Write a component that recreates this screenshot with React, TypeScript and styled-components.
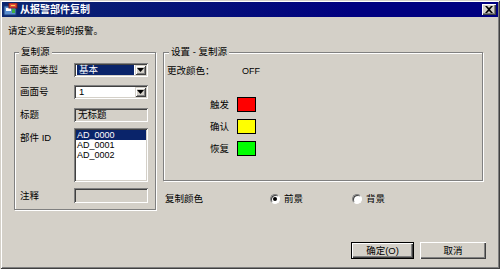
import React from "react";
import styled, { createGlobalStyle } from "styled-components";

const Global = createGlobalStyle`
  html, body { margin: 0; padding: 0; background: #d4d0c8; }
  * { box-sizing: border-box; }
`;

const FONT = `"Liberation Sans", "Noto Sans CJK SC", sans-serif`;

const Window = styled.div`
  width: 500px;
  height: 269px;
  background: #d4d0c8;
  padding: 2px;
  display: flex;
  flex-direction: column;
  font-family: ${FONT};
  font-size: 9.5px;
  color: #000;
  box-shadow: inset 1px 1px 0 #d4d0c8, inset -1px -1px 0 #404040,
    inset 2px 2px 0 #ffffff, inset -2px -2px 0 #808080;
`;

const TitleBar = styled.div`
  height: 15px;
  display: flex;
  align-items: center;
  padding: 0 2px 0 1px;
  background: linear-gradient(to right, #0b2670, #000080 70%);
  color: #fff;
  font-weight: bold;
  font-size: 10px;
  gap: 2px;
`;

const TitleText = styled.span`
  flex: 1;
  line-height: 15px;
  letter-spacing: 0;
`;

const CloseBtn = styled.div`
  width: 14px;
  height: 11px;
  background: #d4d0c8;
  display: flex;
  align-items: center;
  justify-content: center;
  box-shadow: inset 1px 1px 0 #ffffff, inset -1px -1px 0 #404040,
    inset -2px -2px 0 #808080;
`;

const Content = styled.div`
  flex: 1;
  display: flex;
  flex-direction: column;
`;

const Instruction = styled.div`
  margin: 8px 0 0 6px;
  line-height: 12px;
  height: 12px;
`;

const MainRow = styled.div`
  display: flex;
  gap: 7px;
  margin: 15px 0 0 12px;
`;

const Group = styled.div<{ $w: number; $h: number; $pt: number; $pl: number }>`
  position: relative;
  width: ${(p) => p.$w}px;
  height: ${(p) => p.$h}px;
  border: 1px solid #808080;
  box-shadow: 1px 1px 0 #ffffff, inset 1px 1px 0 #ffffff;
  padding: ${(p) => p.$pt}px 0 0 ${(p) => p.$pl}px;
  display: flex;
  flex-direction: column;
`;

const Legend = styled.span<{ $x: number }>`
  position: absolute;
  top: -7px;
  left: ${(p) => p.$x}px;
  padding: 0 2px;
  background: #d4d0c8;
  line-height: 12px;
`;

const FieldRow = styled.div<{ $mt: number; $align?: string }>`
  display: flex;
  align-items: ${(p) => p.$align || "center"};
  margin-top: ${(p) => p.$mt}px;
`;

const Label = styled.span<{ $w: number; $pt?: number }>`
  width: ${(p) => p.$w}px;
  line-height: 12px;
  padding-top: ${(p) => p.$pt || 0}px;
`;

const Sunken = styled.div<{ $h: number; $bg?: string }>`
  width: 74px;
  height: ${(p) => p.$h}px;
  background: ${(p) => p.$bg || "#ffffff"};
  box-shadow: inset 1px 1px 0 #808080, inset -1px -1px 0 #ffffff,
    inset 2px 2px 0 #404040, inset -2px -2px 0 #d4d0c8;
  padding: 2px;
  display: flex;
  position: relative;
`;

const ComboText = styled.div<{ $sel?: boolean }>`
  flex: 1;
  margin: 0 1px 0 1px;
  padding-left: 2px;
  line-height: 10px;
  font-size: 9.5px;
  background: ${(p) => (p.$sel ? "#0a246a" : "transparent")};
  color: ${(p) => (p.$sel ? "#fff" : "#000")};
`;

const DropBtn = styled.div`
  width: 11px;
  height: 10px;
  background: #d4d0c8;
  display: flex;
  align-items: center;
  justify-content: center;
  box-shadow: inset 1px 1px 0 #d4d0c8, inset -1px -1px 0 #404040,
    inset 2px 2px 0 #ffffff, inset -2px -2px 0 #808080;
`;

const StaticText = styled.div`
  padding-left: 2px;
  line-height: 10px;
`;

const List = styled.div`
  flex: 1;
  display: flex;
  flex-direction: column;
`;

const ListItem = styled.div<{ $sel?: boolean }>`
  height: 10px;
  line-height: 10px;
  font-size: 9px;
  padding-left: 1px;
  background: ${(p) => (p.$sel ? "#0a246a" : "transparent")};
  color: ${(p) => (p.$sel ? "#fff" : "#000")};
`;

const RightCol = styled.div`
  width: 320px;
  display: flex;
  flex-direction: column;
`;

const Value = styled.span`
  font-size: 9px;
  line-height: 12px;
`;

const ColorRow = styled.div<{ $mt: number }>`
  display: flex;
  align-items: center;
  margin-top: ${(p) => p.$mt}px;
  gap: 8px;
`;

const ColorLabel = styled.span`
  width: 62px;
  text-align: right;
  line-height: 12px;
`;

const Swatch = styled.div<{ $c: string }>`
  width: 19px;
  height: 15px;
  background: ${(p) => p.$c};
  border: 1px solid #000;
`;

const CopyRow = styled.div`
  display: flex;
  align-items: center;
  margin: 12px 0 0 2px;
  height: 12px;
`;

const RadioOpt = styled.label<{ $w?: number }>`
  display: flex;
  align-items: center;
  gap: 4px;
  width: ${(p) => (p.$w ? `${p.$w}px` : "auto")};
  line-height: 12px;
`;

const RadioCircle = styled.span<{ $on?: boolean }>`
  width: 10px;
  height: 10px;
  border-radius: 50%;
  background: #fff;
  border: 1px solid;
  border-color: #808080 #ffffff #ffffff #808080;
  box-shadow: inset 1px 1px 0 #404040;
  display: flex;
  align-items: center;
  justify-content: center;
  &::after {
    content: "";
    width: 4px;
    height: 4px;
    border-radius: 50%;
    background: ${(p) => (p.$on ? "#000" : "transparent")};
  }
`;

const ButtonRow = styled.div`
  display: flex;
  justify-content: flex-end;
  gap: 6px;
  margin: 32px 12px 0 0;
`;

const Button = styled.div<{ $w: number; $default?: boolean }>`
  width: ${(p) => p.$w}px;
  height: 17px;
  display: flex;
  align-items: center;
  justify-content: center;
  line-height: 12px;
  background: #d4d0c8;
  border: ${(p) => (p.$default ? "1px solid #000" : "none")};
  box-shadow: inset 1px 1px 0 #ffffff, inset -1px -1px 0 #404040,
    inset -2px -2px 0 #808080;
`;

const Arrow = () => (
  <svg width="7" height="4" viewBox="0 0 7 4">
    <path d="M0 0h7L3.5 4z" fill="#000" />
  </svg>
);

const TitleIcon = () => (
  <svg width="15" height="13" viewBox="0 0 15 13">
    <rect x="1" y="3" width="12" height="9" fill="#5a8fd0" stroke="#1c3c78" strokeWidth="1" />
    <rect x="3" y="5" width="5" height="3" fill="#fff" />
    <rect x="9" y="6" width="3" height="4" fill="#3cb043" />
    <rect x="6" y="0" width="8" height="5" fill="#e24a3a" stroke="#7a1a10" strokeWidth="1" />
    <rect x="8" y="2" width="4" height="1" fill="#ffd24a" />
  </svg>
);

const CloseX = () => (
  <svg width="8" height="7" viewBox="0 0 8 7">
    <path d="M0 0h2l2 2 2-2h2L5 3.5 8 7H6L4 5 2 7H0l3-3.5z" fill="#000" />
  </svg>
);

export default function App() {
  return (
    <>
      <Global />
      <Window>
        <TitleBar>
          <TitleIcon />
          <TitleText>从报警部件复制</TitleText>
          <CloseBtn>
            <CloseX />
          </CloseBtn>
        </TitleBar>
        <Content>
          <Instruction>请定义要复制的报警。</Instruction>
          <MainRow>
            <Group $w={142} $h={158} $pt={10} $pl={5}>
              <Legend $x={4}>复制源</Legend>
              <FieldRow $mt={0}>
                <Label $w={54}>画面类型</Label>
                <Sunken $h={14}>
                  <ComboText $sel>基本</ComboText>
                  <DropBtn>
                    <Arrow />
                  </DropBtn>
                </Sunken>
              </FieldRow>
              <FieldRow $mt={8}>
                <Label $w={54}>画面号</Label>
                <Sunken $h={14}>
                  <ComboText>1</ComboText>
                  <DropBtn>
                    <Arrow />
                  </DropBtn>
                </Sunken>
              </FieldRow>
              <FieldRow $mt={9}>
                <Label $w={54}>标题</Label>
                <Sunken $h={14} $bg="#d4d0c8">
                  <StaticText>无标题</StaticText>
                </Sunken>
              </FieldRow>
              <FieldRow $mt={6} $align="flex-start">
                <Label $w={54} $pt={4}>部件 ID</Label>
                <Sunken $h={54}>
                  <List>
                    <ListItem $sel>AD_0000</ListItem>
                    <ListItem>AD_0001</ListItem>
                    <ListItem>AD_0002</ListItem>
                  </List>
                </Sunken>
              </FieldRow>
              <FieldRow $mt={6}>
                <Label $w={54}>注释</Label>
                <Sunken $h={15} $bg="#d4d0c8" />
              </FieldRow>
            </Group>
            <RightCol>
              <Group $w={320} $h={129} $pt={12} $pl={3}>
                <Legend $x={5}>设置 - 复制源</Legend>
                <FieldRow $mt={0}>
                  <Label $w={75}>更改颜色：</Label>
                  <Value>OFF</Value>
                </FieldRow>
                <ColorRow $mt={20}>
                  <ColorLabel>触发</ColorLabel>
                  <Swatch $c="#ff0000" />
                </ColorRow>
                <ColorRow $mt={7}>
                  <ColorLabel>确认</ColorLabel>
                  <Swatch $c="#ffff00" />
                </ColorRow>
                <ColorRow $mt={7}>
                  <ColorLabel>恢复</ColorLabel>
                  <Swatch $c="#00ff00" />
                </ColorRow>
              </Group>
              <CopyRow>
                <Label $w={105}>复制颜色</Label>
                <RadioOpt $w={82}>
                  <RadioCircle $on />
                  前景
                </RadioOpt>
                <RadioOpt>
                  <RadioCircle />
                  背景
                </RadioOpt>
              </CopyRow>
            </RightCol>
          </MainRow>
          <ButtonRow>
            <Button $w={63} $default>
              确定(O)
            </Button>
            <Button $w={66}>取消</Button>
          </ButtonRow>
        </Content>
      </Window>
    </>
  );
}
